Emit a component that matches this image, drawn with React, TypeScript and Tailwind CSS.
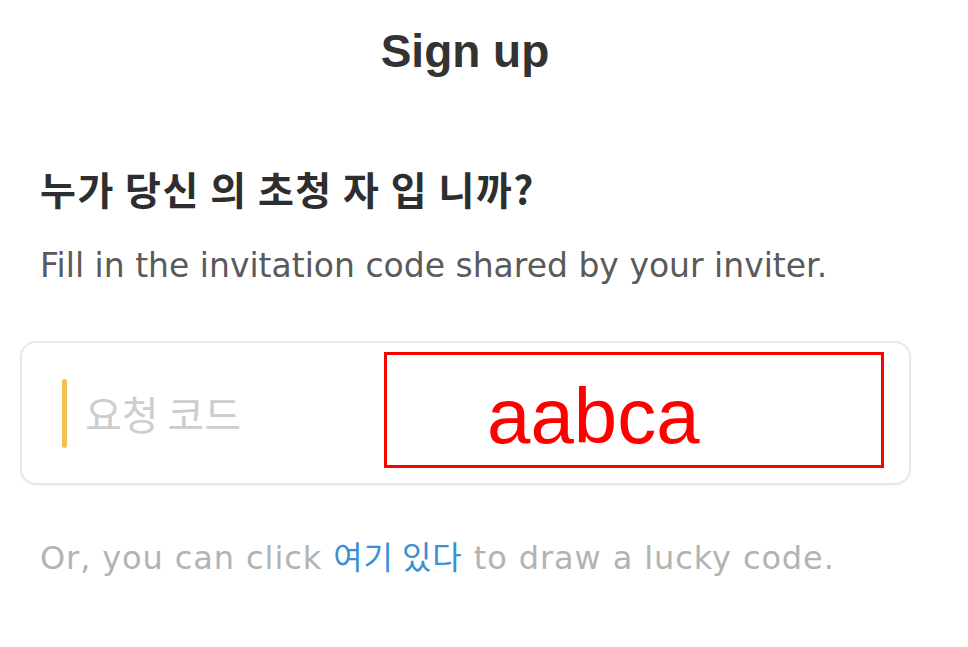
import React from "react";

export default function App() {
  return (
    <div className="w-[968px] h-[647px] bg-white overflow-hidden">
      <div className="pt-[25px] pr-[38px] text-center">
        <h1 className="font-['Liberation_Sans',sans-serif] text-[46px] leading-[52px] font-bold text-[#333333]">
          Sign up
        </h1>
      </div>

      <div className="px-[40px] mt-[87px]">
        <h2 className="font-['Noto_Sans_CJK_KR',sans-serif] text-[39px] leading-[48px] font-bold tracking-[1.5px] text-[#2e2e2e]">
          누가 당신 의 초청 자 입 니까?
        </h2>
        <p className="mt-[34px] font-['DejaVu_Sans','Noto_Sans_CJK_KR',sans-serif] text-[33px] leading-[40px] text-[#5a5a5a]">
          Fill in the invitation code shared by your inviter.
        </p>
      </div>

      <div className="mx-[20px] mt-[55px] w-[891px] h-[144px] rounded-[16px] border-2 border-[#e8e8e8] shadow-[0_1px_3px_rgba(0,0,0,0.04)] relative flex items-center pl-[40px]">
        <div className="w-[5px] h-[69px] rounded-full bg-[#f2c14e]" />
        <span className="ml-[18px] font-['Noto_Sans_CJK_KR',sans-serif] text-[40px] leading-[48px] text-[#cdcdcd]">
          요청 코드
        </span>
        <div className="absolute left-[362px] top-[9px] w-[500px] h-[116px] border-[3px] border-[#ff0000] pl-[100px] pt-[22px]">
          <span className="block font-['Liberation_Sans',sans-serif] text-[78px] leading-[78px] text-[#ff0000]">
            aabca
          </span>
        </div>
      </div>

      <p className="px-[40px] mt-[50px] font-['DejaVu_Sans','Noto_Sans_CJK_KR',sans-serif] text-[32px] leading-[40px] tracking-[0.9px] text-[#b3b3b3] whitespace-nowrap">
        Or, you can click{" "}
        <span className="font-['Noto_Sans_CJK_KR',sans-serif] text-[#3b8fd4]">여기 있다</span>{" "}
        to draw a lucky code.
      </p>
    </div>
  );
}
